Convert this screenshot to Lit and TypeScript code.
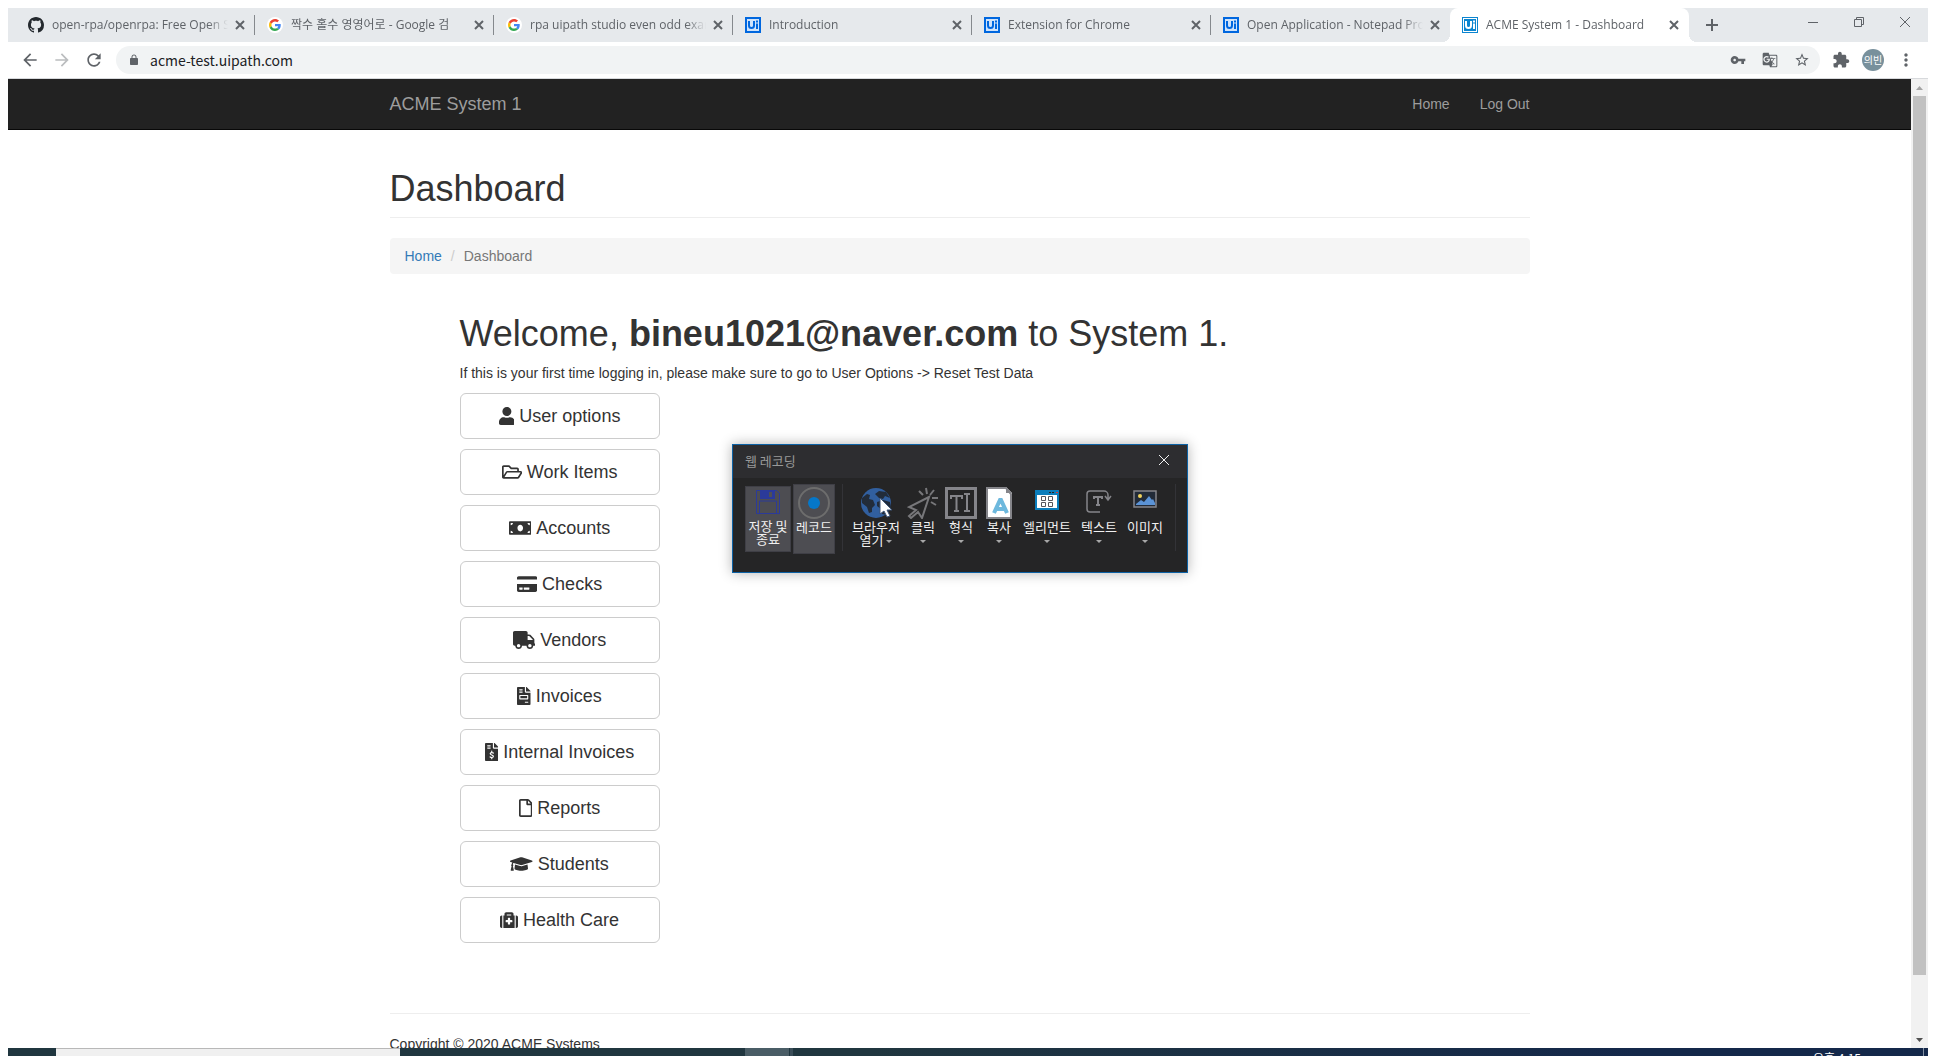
import { LitElement, html, css, svg, TemplateResult, SVGTemplateResult } from "lit";
import { customElement, property } from "lit/decorators.js";
import { classMap } from "lit/directives/class-map.js";

type Icon = { box: string; art: SVGTemplateResult };

const solid = (box: string, d: string): Icon => ({ box, art: svg`<path fill="currentColor" d=${d} />` });

const googleMark: Icon = {
  box: "-8 -8 64 64",
  art: svg`<circle cx="24" cy="24" r="32" fill="#fff" />
    <path fill="#EA4335" d="M24 9.5c3.54 0 6.71 1.22 9.21 3.6l6.85-6.85C35.9 2.38 30.47 0 24 0 14.62 0 6.51 5.38 2.56 13.22l7.98 6.19C12.43 13.72 17.74 9.5 24 9.5z" />
    <path fill="#4285F4" d="M46.98 24.55c0-1.57-.15-3.09-.38-4.55H24v9.02h12.94c-.58 2.96-2.26 5.48-4.78 7.18l7.73 6c4.51-4.18 7.09-10.36 7.09-17.65z" />
    <path fill="#FBBC05" d="M10.53 28.59c-.48-1.45-.76-2.99-.76-4.59s.27-3.14.76-4.59l-7.98-6.19C.92 16.46 0 20.12 0 24c0 3.88.92 7.54 2.56 10.78l7.97-6.19z" />
    <path fill="#34A853" d="M24 48c6.48 0 11.93-2.13 15.89-5.81l-7.73-6c-2.15 1.45-4.92 2.3-8.16 2.3-6.26 0-11.57-4.22-13.47-9.91l-7.98 6.19C6.51 42.62 14.62 48 24 48z" />`,
};

const uiMark = (edge: string, fill: string, ink: string): Icon => ({
  box: "0 0 16 16",
  art: svg`<rect width="16" height="16" fill=${edge} /><rect x="2" y="2" width="12" height="12" fill=${fill} />
    <path fill="none" stroke=${ink} stroke-width="2" d="M4 4v4.500a2.500 2.500 0 0 0 5 0V4M12 6.500V12M12 3.500v2" />`,
});

const docsMark = uiMark("#0067df", "#cfe3fb", "#0067df");
const acmeMark = uiMark("#0b85d0", "#0b85d0", "#ffffff");
const acmeFramed: Icon = {
  box: "0 0 16 16",
  art: svg`${acmeMark.art}<rect x="1.500" y="1.500" width="13" height="13" fill="none" stroke="#fff" />`,
};

const icons = {
  github: solid("0 0 16 16", "M8 0C3.58 0 0 3.58 0 8c0 3.54 2.29 6.53 5.47 7.59.4.07.55-.17.55-.38 0-.19-.01-.82-.01-1.49-2.01.37-2.53-.49-2.69-.94-.09-.23-.48-.94-.82-1.13-.28-.15-.68-.52-.01-.53.63-.01 1.08.58 1.23.82.72 1.21 1.87.87 2.33.66.07-.52.28-.87.51-1.07-1.78-.2-3.64-.89-3.64-3.95 0-.87.31-1.59.82-2.15-.08-.2-.36-1.02.08-2.12 0 0 .67-.21 2.2.82.64-.18 1.32-.27 2-.27s1.36.09 2 .27c1.53-1.04 2.2-.82 2.2-.82.44 1.1.16 1.92.08 2.12.51.56.82 1.27.82 2.15 0 3.07-1.87 3.75-3.65 3.95.29.25.54.73.54 1.48 0 1.07-.01 1.93-.01 2.2 0 .21.15.46.55.38A8.01 8.01 0 0 0 16 8c0-4.42-3.58-8-8-8z"),
  back: solid("0 0 24 24", "M20 11H7.83l5.59-5.59L12 4l-8 8 8 8 1.41-1.41L7.83 13H20v-2z"),
  forward: solid("0 0 24 24", "M12 4l-1.41 1.41L16.17 11H4v2h12.17l-5.58 5.59L12 20l8-8z"),
  reload: solid("0 0 24 24", "M17.65 6.35C16.2 4.9 14.21 4 12 4c-4.42 0-7.99 3.58-7.99 8s3.57 8 7.99 8c3.73 0 6.84-2.55 7.73-6h-2.08c-.82 2.33-3.04 4-5.65 4-3.31 0-6-2.69-6-6s2.69-6 6-6c1.66 0 3.14.69 4.22 1.78L13 11h7V4l-2.350 2.350z"),
  lock: solid("0 0 24 24", "M18 8h-1V6c0-2.760-2.240-5-5-5S7 3.240 7 6v2H6c-1.100 0-2 .9-2 2v10c0 1.100.9 2 2 2h12c1.100 0 2-.9 2-2V10c0-1.100-.9-2-2-2zM8.900 8V6c0-1.710 1.390-3.100 3.100-3.100s3.100 1.390 3.100 3.100v2z"),
  key: solid("0 0 24 24", "M12.65 10C11.83 7.67 9.61 6 7 6c-3.31 0-6 2.69-6 6s2.69 6 6 6c2.61 0 4.83-1.67 5.65-4H17v4h4v-4h2v-4H12.65zM7 14c-1.100 0-2-.9-2-2s.9-2 2-2 2 .9 2 2-.9 2-2 2z"),
  translate: solid("0 0 24 24", "M21 4H11l-1-3H3c-1.100 0-2 .9-2 2v15c0 1.100.9 2 2 2h8l1 3h9c1.100 0 2-.9 2-2V6c0-1.100-.9-2-2-2zM7 16c-2.760 0-5-2.240-5-5s2.240-5 5-5c1.350 0 2.480.5 3.350 1.300L9.030 8.570c-.38-.36-1.040-.78-2.030-.78-1.740 0-3.150 1.440-3.150 3.210S5.260 14.210 7 14.210c2.010 0 2.840-1.440 2.920-2.410H7v-1.710h4.680c.07.31.12.61.12 1.020C11.800 13.970 9.890 16 7 16zm6.170-5.420h3.700c-.43 1.250-1.110 2.430-2.050 3.470-.31-.35-.6-.72-.86-1.100l-.79-2.370zm8.330 9.920c0 .55-.45 1-1 1H14l2-2.500-1.040-3.100 3.100 3.100.92-.92-3.300-3.250.02-.02c1.130-1.250 1.930-2.690 2.400-4.220H20v-1.300h-4.530V8h-1.290v1.290h-1.440L11.460 5.500h9.040c.55 0 1 .45 1 1v14z"),
  star: solid("0 0 24 24", "M22 9.24l-7.19-.62L12 2 9.19 8.630 2 9.24l5.46 4.730L5.82 21 12 17.27 18.18 21l-1.630-7.030L22 9.24zM12 15.4l-3.760 2.270 1-4.280-3.320-2.880 4.380-.38L12 6.100l1.710 4.040 4.380.38-3.320 2.880 1 4.280L12 15.4z"),
  puzzle: solid("0 0 24 24", "M20.5 11H19V7c0-1.100-.9-2-2-2h-4V3.500C13 2.120 11.880 1 10.500 1S8 2.120 8 3.500V5H4c-1.100 0-1.990.9-1.990 2v3.800H3.500c1.490 0 2.700 1.210 2.700 2.700s-1.210 2.700-2.700 2.700H2V20c0 1.100.9 2 2 2h3.800v-1.500c0-1.490 1.210-2.700 2.700-2.700 1.490 0 2.700 1.210 2.700 2.700V22H17c1.100 0 2-.9 2-2v-4h1.500c1.380 0 2.500-1.120 2.500-2.500S21.880 11 20.500 11z"),
  more: solid("0 0 24 24", "M12 8c1.100 0 2-.9 2-2s-.9-2-2-2-2 .9-2 2 .9 2 2 2zm0 2c-1.100 0-2 .9-2 2s.9 2 2 2 2-.9 2-2-.9-2-2-2zm0 6c-1.100 0-2 .9-2 2s.9 2 2 2 2-.9 2-2-.9-2-2-2z"),
  cross: { box: "0 0 16 16", art: svg`<path fill="none" stroke="currentColor" stroke-width="2" d="M4 4l8 8M12 4l-8 8" />` },
  plus: { box: "0 0 16 16", art: svg`<path fill="none" stroke="currentColor" stroke-width="2" d="M8 2v12M2 8h12" />` },
  minimise: { box: "0 0 12 12", art: svg`<path stroke="currentColor" d="M1 6.500h10" />` },
  restore: { box: "0 0 12 12", art: svg`<path fill="none" stroke="currentColor" d="M1.500 3.500h7v7h-7zM3.500 3.500v-2h7v7h-2" />` },
  thinCross: { box: "0 0 12 12", art: svg`<path fill="none" stroke="currentColor" d="M1 1l10 10M11 1L1 11" />` },
  scrollUp: solid("0 0 7 4", "M0 4L3.500 0L7 4z"),
  scrollDown: solid("0 0 7 4", "M0 0L3.500 4L7 0z"),
  user: solid("0 0 448 512", "M224 256c70.7 0 128-57.3 128-128S294.7 0 224 0 96 57.3 96 128s57.3 128 128 128zm89.6 32h-16.7c-22.2 10.2-46.9 16-72.9 16s-50.6-5.8-72.9-16h-16.7C60.2 288 0 348.2 0 422.4V464c0 26.5 21.5 48 48 48h352c26.5 0 48-21.5 48-48v-41.6c0-74.2-60.2-134.4-134.4-134.4z"),
  folder: solid("0 0 576 512", "M527.9 224H480v-48c0-26.5-21.5-48-48-48H272l-64-64H48C21.5 64 0 85.5 0 112v288c0 26.5 21.5 48 48 48h400c16.5 0 31.9-8.5 40.7-22.6l79.9-128c20-31.9-3-73.4-40.7-73.4zM48 118c0-3.3 2.7-6 6-6h134.1l64 64H426c3.3 0 6 2.7 6 6v42H152c-16.8 0-32.4 8.8-41.1 23.2L48 351.4zm400 282H72l77.2-128H528z"),
  money: solid("0 0 640 512", "M608 64H32C14.33 64 0 78.33 0 96v320c0 17.67 14.33 32 32 32h576c17.67 0 32-14.33 32-32V96c0-17.67-14.33-32-32-32zM48 400v-64c35.35 0 64 28.65 64 64H48zm0-224v-64h64c0 35.35-28.65 64-64 64zm272 176c-44.19 0-80-42.99-80-96 0-53.02 35.82-96 80-96s80 42.98 80 96c0 53.03-35.83 96-80 96zm272 48h-64c0-35.35 28.65-64 64-64v64zm0-224c-35.35 0-64-28.65-64-64h64v64z"),
  card: solid("0 0 576 512", "M0 432c0 26.5 21.5 48 48 48h480c26.5 0 48-21.5 48-48V256H0v176zm192-68c0-6.6 5.4-12 12-12h136c6.6 0 12 5.4 12 12v40c0 6.6-5.4 12-12 12H204c-6.6 0-12-5.4-12-12v-40zm-128 0c0-6.6 5.4-12 12-12h72c6.6 0 12 5.4 12 12v40c0 6.6-5.4 12-12 12H76c-6.6 0-12-5.4-12-12v-40zM576 80v48H0V80c0-26.5 21.5-48 48-48h480c26.5 0 48 21.5 48 48z"),
  truck: solid("0 0 640 512", "M624 352h-16V243.9c0-12.7-5.1-24.9-14.1-33.9L494 110.1c-9-9-21.2-14.1-33.9-14.1H416V48c0-26.5-21.5-48-48-48H48C21.5 0 0 21.5 0 48v320c0 26.5 21.5 48 48 48h16c0 53 43 96 96 96s96-43 96-96h128c0 53 43 96 96 96s96-43 96-96h48c8.8 0 16-7.2 16-16v-32c0-8.8-7.2-16-16-16zM160 464c-26.5 0-48-21.5-48-48s21.5-48 48-48 48 21.5 48 48-21.5 48-48 48zm320 0c-26.5 0-48-21.5-48-48s21.5-48 48-48 48 21.5 48 48-21.5 48-48 48zm80-208H416V144h44.1l99.9 99.9V256z"),
  invoice: solid("0 0 384 512", "M288 256H96v64h192v-64zm89-151L279.1 7c-4.5-4.5-10.6-7-17-7H256v128h128v-6.1c0-6.3-2.5-12.4-7-16.9zm-153 31V0H24C10.7 0 0 10.7 0 24v464c0 13.3 10.7 24 24 24h336c13.3 0 24-10.7 24-24V160H248c-13.2 0-24-10.8-24-24zM64 72c0-4.42 3.58-8 8-8h80c4.42 0 8 3.58 8 8v16c0 4.42-3.58 8-8 8H72c-4.42 0-8-3.58-8-8V72zm0 64c0-4.42 3.58-8 8-8h80c4.42 0 8 3.58 8 8v16c0 4.42-3.58 8-8 8H72c-4.42 0-8-3.58-8-8v-16zm256 304c0 4.42-3.58 8-8 8h-80c-4.42 0-8-3.58-8-8v-16c0-4.42 3.58-8 8-8h80c4.42 0 8 3.58 8 8v16zm0-200v96c0 8.84-7.16 16-16 16H80c-8.84 0-16-7.16-16-16v-96c0-8.84 7.16-16 16-16h224c8.84 0 16 7.16 16 16z"),
  dollarFile: {
    box: "0 0 384 512",
    art: svg`<path fill="currentColor" d="M377 105L279.1 7c-4.5-4.5-10.6-7-17-7H256v128h128v-6.1c0-6.3-2.5-12.4-7-16.9zm-153 31V0H24C10.7 0 0 10.7 0 24v464c0 13.3 10.7 24 24 24h336c13.3 0 24-10.7 24-24V160H248c-13.2 0-24-10.8-24-24zM64 72c0-4.42 3.58-8 8-8h80c4.42 0 8 3.58 8 8v16c0 4.42-3.58 8-8 8H72c-4.42 0-8-3.58-8-8V72zm0 80v-16c0-4.42 3.58-8 8-8h80c4.42 0 8 3.58 8 8v16c0 4.42-3.58 8-8 8H72c-4.42 0-8-3.58-8-8z" />
      <path fill="none" stroke="#fff" stroke-width="34" stroke-linecap="round" d="M238 286c-20-16-84-20-90 18c-5 40 90 32 90 76c0 42-66 40-92 18M192 232v30M192 420v28" />`,
  },
  file: solid("0 0 384 512", "M369.9 97.900L286 14C277 5 264.800 0 252.100 0H48C21.500 0 0 21.500 0 48v416c0 26.500 21.500 48 48 48h288c26.500 0 48-21.500 48-48V131.900c0-12.700-5.100-25-14.100-34zM332.100 128H256V51.900l76.100 76.100zM48 464V48h160v104c0 13.300 10.700 24 24 24h104v288H48z"),
  cap: solid("0 0 640 512", "M622.34 153.2L343.4 67.5c-15.2-4.67-31.6-4.67-46.79 0L17.66 153.2c-23.54 7.23-23.54 38.36 0 45.59l48.63 14.94c-10.67 13.19-17.23 29.28-17.88 46.9C38.78 266.15 32 276.11 32 288c0 10.78 5.68 19.85 13.86 25.65L20.33 428.53C18.11 438.52 25.71 448 35.94 448h56.11c10.24 0 17.84-9.48 15.62-19.47L82.14 313.65C90.32 307.85 96 298.78 96 288c0-11.57-6.47-21.25-15.66-26.87.76-15.02 8.44-28.3 20.69-36.72L296.6 284.5c9.06 2.78 26.44 6.25 46.79 0l278.95-85.7c23.55-7.24 23.55-38.36 0-45.6zM352.79 315.09c-28.53 8.76-52.84 3.92-65.59 0l-145.02-44.55L128 384c0 35.35 85.96 64 192 64s192-28.65 192-64l-14.18-113.47-145.03 44.56z"),
  medkit: solid("0 0 512 512", "M96 480h320V128h-32V80c0-26.51-21.49-48-48-48H176c-26.51 0-48 21.49-48 48v48H96v352zm96-384h128v32H192V96zm320 80v256c0 26.51-21.49 48-48 48h-16V128h16c26.51 0 48 21.49 48 48zM64 480H48c-26.51 0-48-21.49-48-48V176c0-26.51 21.49-48 48-48h16v352zm288-208v32c0 8.837-7.163 16-16 16h-48v48c0 8.837-7.163 16-16 16h-32c-8.837 0-16-7.163-16-16v-48h-48c-8.837 0-16-7.163-16-16v-32c0-8.837 7.163-16 16-16h48v-48c0-8.837 7.163-16 16-16h32c8.837 0 16 7.163 16 16v48h48c8.837 0 16 7.163 16 16z"),
};

/* Recorder artwork shares a 32-unit canvas. */
const art = (content: SVGTemplateResult): Icon => ({ box: "0 0 32 32", art: content });

const recorderIcons = {
  save: art(svg`<path fill="none" stroke="#2b3a9a" d="M4.500 3.500h20l3 3v20h-23zM7.500 26v-12h17v12" /><path fill="#2b3a9a" d="M8 3h15v9H8z" /><path fill="#4f4f55" d="M17 5h3v5h-3z" />`),
  record: art(svg`<circle cx="16" cy="16" r="15" fill="none" stroke="#6d6d6d" stroke-width="2" /><circle cx="16" cy="16" r="6" fill="#0577c9" />`),
  browser: art(svg`<circle cx="16" cy="16" r="15" fill="#315f9f" />
    <path fill="#222c3a" d="M2 11l5-4 3 1-1 4 4 1 2 5-3 3 0 4-3 1-2-6-5-4zM15 7l4-3 7 1 4 6-5-2-2 3-4-1zM17 15l6-2 7 2 1 5-4 8-5-1-1-5-4-3z" />
    <path fill="#fff" stroke="#3d5577" stroke-width="1" d="M20 11v16l4-3 3 6 3-1-3-6h5z" />`),
  click: art(svg`<g fill="none" stroke="#77777a" stroke-width="2"><path d="M22 10L2 20l7 3-7 6 2 2 7-6 4 6z" /><path d="M12 4l4 4M19 1l1 6M27 3l-4 5M25 11h6M24 15l5 3" /></g>`),
  type: art(svg`<g fill="none" stroke="#85858a" stroke-width="2"><path stroke-width="3" d="M1.500 1.500h29v29h-29z" /><path d="M6 12V9h11v3M11.500 9v15M9 24h5M19 7h6M22 7v17M19 24h6" /></g>`),
  copy: art(svg`<path fill="#fff" d="M3 0h20l6 6v26H3z" /><path fill="#85858a" d="M23 0v6h6z" /><path fill="none" stroke="#85858a" stroke-width="2" d="M4 31V1h19l5 6v24z" /><path fill="none" stroke="#6db8dd" stroke-width="4" d="M11 26l6-13h1l6 13M14 22h8" />`),
  element: art(svg`<path fill="#0b7dbb" d="M4 3h24v20H4z" /><path fill="#fff" d="M6 8h20v13H6z" /><path fill="#222" d="M18 5h2v1h-2zM21 5h2v1h-2z" /><path fill="#e03a3a" d="M25 5h2v1h-2z" /><path fill="none" stroke="#55555a" d="M10.500 9.500h4v4h-4zM17.500 9.500h4v4h-4zM10.500 15.500h4v4h-4zM17.500 15.500h4v4h-4z" />`),
  text: art(svg`<g fill="none" stroke="#85858a" stroke-width="1.500"><path d="M17 25H7a3 3 0 0 1-3-3V7a3 3 0 0 1 3-3h14a4 4 0 0 1 4 4v4M22 9l3 4 3-4" /><path stroke-width="2" d="M11 12v-2h8v2M15 10v8M13 18h4" /></g>`),
  image: art(svg`<path fill="#222b38" stroke="#85858a" stroke-width="1.500" d="M5 4h22v16H5z" /><path fill="#5b93d6" d="M7 18v-1l5-4 3 2 5-6 3 4 1-1 2 4v2z" /><circle cx="11" cy="9" r="2" fill="#f2d45c" />`),
  caret: solid("0 0 6 3", "M0 0h6L3 3z"),
};

const draw = (icon: Icon, cls: string): TemplateResult =>
  html`<svg class=${cls} viewBox=${icon.box} aria-hidden="true">${icon.art}</svg>`;

const reset = css`
  :host, *, *::before, *::after { box-sizing: border-box; }
  button, input { font: inherit; color: inherit; background: none; border: 0; padding: 0; margin: 0; border-radius: 0; outline: 0; }
  button { display: flex; align-items: center; justify-content: center; cursor: pointer; }
  a { text-decoration: none; }
  svg { display: block; flex: none; }
`;

@customElement("browser-chrome")
export class BrowserChrome extends LitElement {
  static styles = [reset, css`
    :host { display: block; font: 12px/16px "Open Sans", "Noto Sans CJK KR", sans-serif; color: #5f6368; }
    .strip { display: flex; height: 34px; padding-left: 8px; background: #e6e9ec; }
    .tab { position: relative; display: flex; align-items: center; flex: 0 1 239px; min-width: 0; padding-left: 12px; }
    .tab.active { background: #fff; border-radius: 8px 8px 0 0; }
    .tab.active::before, .tab.active::after { content: ""; position: absolute; bottom: 0; width: 8px; height: 8px; }
    .tab.active::before { right: 100%; background: radial-gradient(circle at 0 0, transparent 8px, #fff 8px); }
    .tab.active::after { left: 100%; background: radial-gradient(circle at 100% 0, transparent 8px, #fff 8px); }
    .favicon { width: 16px; height: 16px; color: #24292e; }
    .title { flex: 1; min-width: 0; margin: 0 4px 0 8px; overflow: hidden; white-space: nowrap; mask-image: linear-gradient(to left, transparent, #000 20px); }
    .close { width: 16px; height: 16px; margin-right: 6px; }
    .glyph { width: 16px; height: 16px; }
    .divider { width: 1px; height: 20px; background: #85898d; }
    .active .divider, .last .divider { background: transparent; }
    .add { width: 28px; margin-left: 9px; }
    .controls { display: flex; margin-left: auto; height: 28px; }
    .control { width: 46px; }
    .small { width: 12px; height: 12px; }
    .bar { display: flex; align-items: center; gap: 12px; height: 37px; padding: 0 12px; border-bottom: 1px solid #d7d9dc; background: #fff; }
    .nav { width: 20px; height: 20px; }
    .nav svg { width: 20px; height: 20px; }
    .muted { color: #bbbdbf; }
    .omnibox { flex: 1; display: flex; align-items: center; gap: 16px; height: 28px; padding: 0 10px 0 12px; border-radius: 14px; background: #f1f3f4; }
    .address { display: flex; flex: 1; align-items: center; gap: 10px; }
    .lock { width: 12px; height: 12px; }
    .url { flex: 1; min-width: 0; font: 14px/20px "Noto Sans CJK KR", sans-serif; color: #202124; }
    .ext { width: 18px; height: 18px; }
    .avatar { width: 22px; height: 22px; border-radius: 50%; background: #78909c; color: #fff; font-size: 10px; line-height: 22px; white-space: nowrap; }
  `];

  private tabs = [
    { title: "open-rpa/openrpa: Free Open S", icon: icons.github },
    { title: "짝수 홀수 영영어로 - Google 검", icon: googleMark },
    { title: "rpa uipath studio even odd exam", icon: googleMark },
    { title: "Introduction", icon: docsMark },
    { title: "Extension for Chrome", icon: docsMark },
    { title: "Open Application - Notepad Pro", icon: docsMark, last: true },
    { title: "ACME System 1 - Dashboard", icon: acmeFramed, active: true },
  ];

  render() {
    return html`
      <div class="strip">
        ${this.tabs.map((t) => html`
          <div class=${classMap({ tab: true, active: !!t.active, last: !!t.last })}>
            ${draw(t.icon, "favicon")}
            <span class="title">${t.title}</span>
            <button class="close" aria-label="Close tab">${draw(icons.cross, "glyph")}</button>
            <span class="divider"></span>
          </div>`)}
        <button class="add" aria-label="New tab">${draw(icons.plus, "glyph")}</button>
        <div class="controls">
          <button class="control" aria-label="Minimize">${draw(icons.minimise, "small")}</button>
          <button class="control" aria-label="Restore">${draw(icons.restore, "small")}</button>
          <button class="control" aria-label="Close">${draw(icons.thinCross, "small")}</button>
        </div>
      </div>
      <div class="bar">
        <button class="nav" aria-label="Back">${draw(icons.back, "")}</button>
        <button class="nav muted" aria-label="Forward">${draw(icons.forward, "")}</button>
        <button class="nav" aria-label="Reload">${draw(icons.reload, "")}</button>
        <div class="omnibox">
          <label class="address">${draw(icons.lock, "lock")}<input class="url" aria-label="Address" .value=${"acme-test.uipath.com"} /></label>
          <button aria-label="Passwords">${draw(icons.key, "glyph")}</button>
          <button aria-label="Translate">${draw(icons.translate, "glyph")}</button>
          <button aria-label="Bookmark">${draw(icons.star, "glyph")}</button>
        </div>
        <button aria-label="Extensions">${draw(icons.puzzle, "ext")}</button>
        <button class="avatar">의빈</button>
        <button class="nav" aria-label="Menu">${draw(icons.more, "")}</button>
      </div>`;
  }
}

@customElement("acme-page")
export class AcmePage extends LitElement {
  static styles = [reset, css`
    :host { display: block; font: 14px/20px "Liberation Sans", Arial, sans-serif; color: #333; background: #fff; }
    .navbar { height: 51px; background: #222; border-bottom: 1px solid #080808; }
    .container { max-width: 1140px; margin: 0 auto; }
    .navrow { display: flex; align-items: center; height: 50px; gap: 30px; }
    .navrow a { color: #9d9d9d; }
    .navrow .brand { margin-right: auto; font-size: 18px; }
    h1 { margin: 0; font-size: 36px; line-height: 40px; font-weight: 400; }
    .heading { margin-top: 39px; padding-bottom: 8px; border-bottom: 1px solid #eee; }
    .crumbs { display: flex; margin: 20px 0 0; padding: 8px 15px; border-radius: 4px; background: #f5f5f5; list-style: none; color: #777; }
    .crumbs a { color: #337ab7; }
    .crumbs li + li::before { content: "/"; padding: 0 9px; color: #ccc; }
    .welcome { padding: 40px 0 0 70px; }
    .welcome p { margin: 9px 0 10px; }
    .menu { display: flex; flex-direction: column; gap: 10px; width: 200px; }
    .item { display: flex; align-items: center; justify-content: center; gap: 5px; height: 46px; border: 1px solid #ccc; border-radius: 6px; background: #fff; color: #333; font-size: 18px; line-height: 24px; }
    .glyph { height: 18px; width: auto; }
    .footer { margin-top: 70px; padding-top: 20px; border-top: 1px solid #eee; }
    .footer p { margin: 0; }
  `];

  private items: [Icon, string][] = [
    [icons.user, "User options"],
    [icons.folder, "Work Items"],
    [icons.money, "Accounts"],
    [icons.card, "Checks"],
    [icons.truck, "Vendors"],
    [icons.invoice, "Invoices"],
    [icons.dollarFile, "Internal Invoices"],
    [icons.file, "Reports"],
    [icons.cap, "Students"],
    [icons.medkit, "Health Care"],
  ];

  render() {
    return html`
      <nav class="navbar">
        <div class="container navrow">
          <a class="brand" href="#">ACME System 1</a>
          <a href="#">Home</a>
          <a href="#">Log Out</a>
        </div>
      </nav>
      <main class="container">
        <h1 class="heading">Dashboard</h1>
        <ol class="crumbs"><li><a href="#">Home</a></li><li>Dashboard</li></ol>
        <section class="welcome">
          <h1>Welcome, <b>bineu1021@naver.com</b> to System 1.</h1>
          <p>If this is your first time logging in, please make sure to go to User Options -&gt; Reset Test Data</p>
          <div class="menu">
            ${this.items.map(([icon, label]) => html`<button class="item">${draw(icon, "glyph")}<span>${label}</span></button>`)}
          </div>
        </section>
        <footer class="footer"><p>Copyright © 2020 ACME Systems</p></footer>
      </main>`;
  }
}

@customElement("web-recorder")
export class WebRecorder extends LitElement {
  static styles = [reset, css`
    :host { display: block; width: 456px; height: 129px; border: 1px solid #0d62a5; background: #252526; box-shadow: 0 0 12px rgba(0, 0, 0, 0.3); color: #f1f1f1; font: 13px/13px "Noto Sans CJK KR", sans-serif; }
    .head { display: flex; align-items: center; justify-content: space-between; height: 33px; padding: 0 17px 3px 12px; background: #2d2d30; color: #999; }
    .close { color: #f1f1f1; }
    .small { width: 12px; height: 12px; }
    .body { display: flex; align-items: flex-start; padding: 6px 0 0 12px; }
    .tool { flex-direction: column; justify-content: flex-start; padding: 3px 0 0; white-space: nowrap; }
    .pic { width: 32px; height: 32px; }
    .label { margin-top: 1px; }
    .boxed { background: #4d4d52; border: 1px solid #3f3f46; }
    .save { width: 46px; height: 66px; margin: 2px 2px 0 0; padding: 0; }
    .save .label { margin-top: 0; }
    .record { width: 42px; height: 70px; padding-top: 2px; }
    .rule { width: 1px; height: 67px; margin: 0 5px 0 7px; background: #333337; }
    .narrow { width: 38px; }
    .medium { width: 46px; }
    .wide { width: 56px; }
    .broad { width: 58px; }
    .caret { display: inline-block; width: 6px; height: 3px; margin-left: 3px; vertical-align: middle; color: #a8a8a8; }
    .below { display: flex; justify-content: center; margin-top: 7px; }
    .below .caret { margin: 0; }
  `];

  private commands: [Icon, string, string][] = [
    [recorderIcons.click, "클릭", "narrow"],
    [recorderIcons.type, "형식", "narrow"],
    [recorderIcons.copy, "복사", "narrow"],
    [recorderIcons.element, "엘리먼트", "broad"],
    [recorderIcons.text, "텍스트", "medium"],
    [recorderIcons.image, "이미지", "medium"],
  ];

  render() {
    return html`
      <div class="head"><span>웹 레코딩</span><button class="close" aria-label="Close">${draw(icons.thinCross, "small")}</button></div>
      <div class="body">
        <button class="tool boxed save">${draw(recorderIcons.save, "pic")}<span class="label">저장 및<br />종료</span></button>
        <button class="tool boxed record">${draw(recorderIcons.record, "pic")}<span class="label">레코드</span></button>
        <span class="rule"></span>
        <button class="tool wide">${draw(recorderIcons.browser, "pic")}<span class="label">브라우저<br />열기${draw(recorderIcons.caret, "caret")}</span></button>
        ${this.commands.map(([icon, label, size]) => html`
          <button class="tool ${size}">${draw(icon, "pic")}<span class="label">${label}<span class="below">${draw(recorderIcons.caret, "caret")}</span></span></button>`)}
        <span class="rule"></span>
      </div>`;
  }
}

@customElement("app-root")
export class AppRoot extends LitElement {
  @property() clock = "오후 4:15";

  static styles = [reset, css`
    :host { display: flex; flex-direction: column; height: 100vh; overflow: hidden; padding: 8px 8px 0; background: #fff; }
    .view { display: flex; flex: 1; min-height: 0; }
    acme-page { flex: 1; min-width: 0; overflow: hidden; }
    .scroll { display: flex; flex-direction: column; width: 17px; background: #f1f1f1; }
    .step { height: 17px; color: #a3a3a3; }
    .step.down { color: #505050; }
    .step svg { width: 7px; height: 4px; }
    .track { display: flex; flex-direction: column; flex: 1; padding: 0 2px; }
    .thumb { flex: 0 0 94%; background: #c1c1c1; }
    .taskbar { display: flex; flex: none; height: 8px; overflow: hidden; background: linear-gradient(to right, #20363f 45%, #14284a 85%); color: #fff; font: 12px/16px "Noto Sans CJK KR", sans-serif; }
    .search { width: 344px; height: 40px; margin-left: 48px; background: #f0f0f0; border-top: 1px solid #b8b8b8; }
    .running { width: 44px; margin-left: 345px; background: #4a5d66; }
    .running.next { width: 3px; margin-left: 1px; background: #3a4d58; }
    .clock { margin: 2px 62px 0 auto; }
    .desktop { width: 1px; margin-right: 4px; background: #8391a3; }
    web-recorder { position: absolute; left: 732px; top: 444px; }
  `];

  render() {
    return html`
      <browser-chrome></browser-chrome>
      <div class="view">
        <acme-page></acme-page>
        <div class="scroll">
          <button class="step" aria-label="Scroll up">${draw(icons.scrollUp, "")}</button>
          <div class="track"><div class="thumb"></div></div>
          <button class="step down" aria-label="Scroll down">${draw(icons.scrollDown, "")}</button>
        </div>
      </div>
      <div class="taskbar">
        <input class="search" aria-label="Search" />
        <span class="running"></span><span class="running next"></span>
        <span class="clock">${this.clock}</span>
        <span class="desktop"></span>
      </div>
      <web-recorder></web-recorder>`;
  }
}
